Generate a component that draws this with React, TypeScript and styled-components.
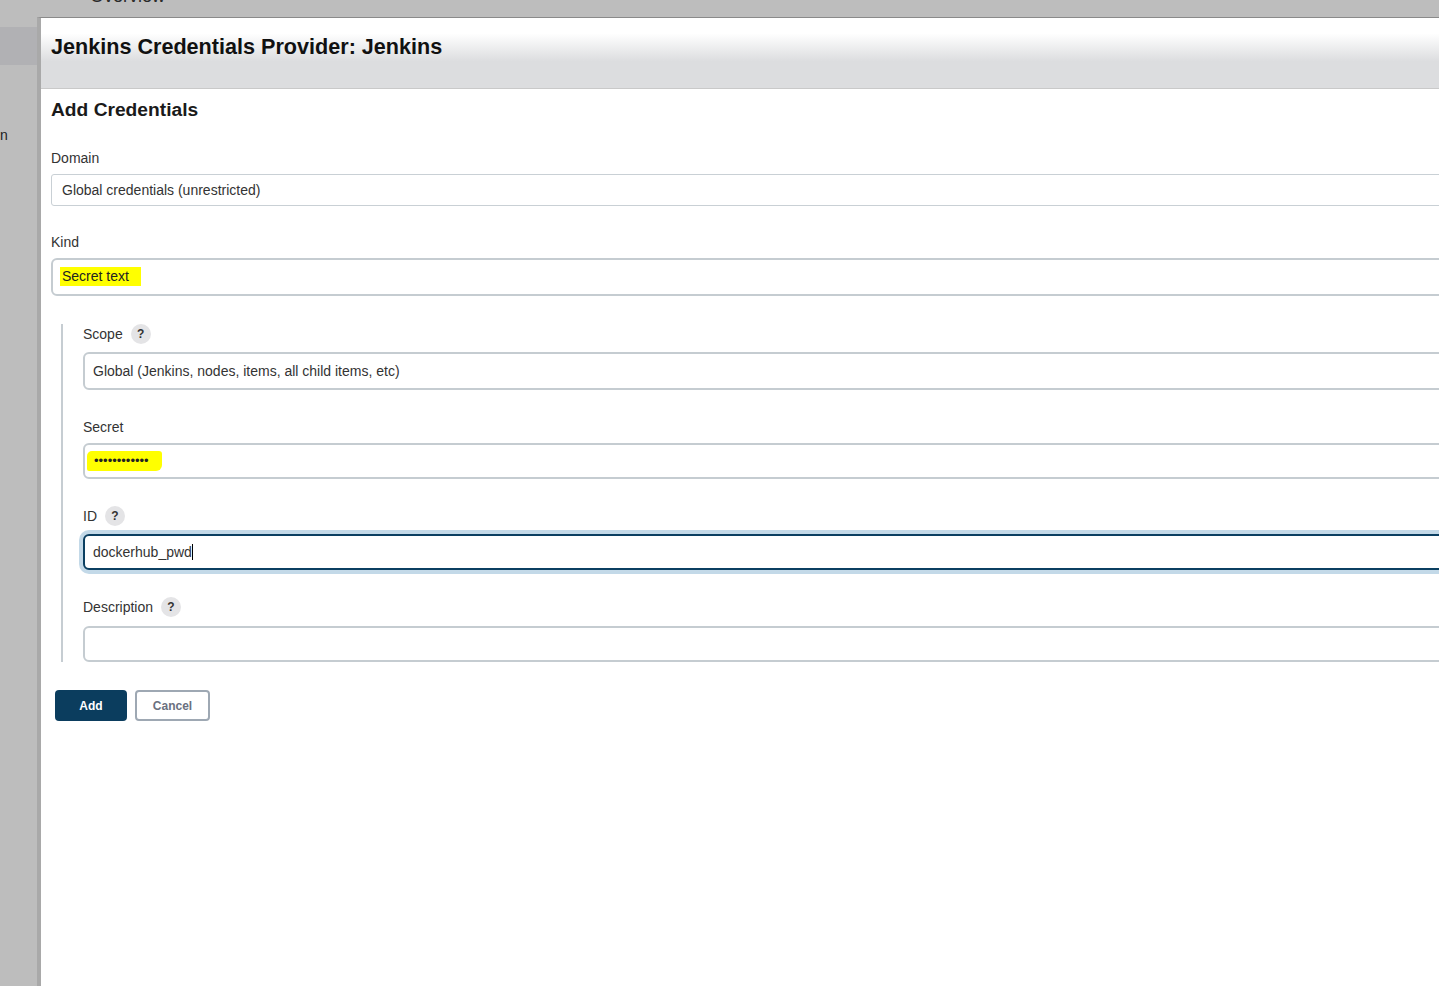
import React from 'react';
import styled, { createGlobalStyle } from 'styled-components';

const GlobalStyle = createGlobalStyle`
  html, body { margin: 0; padding: 0; height: 100%; overflow: hidden; background: #bdbdbd; }
  body { font-family: "Liberation Sans", Arial, sans-serif; color: #333; }
  #root { height: 100%; }
  * { box-sizing: border-box; }
`;

const Page = styled.div`
  display: flex;
  width: 100vw;
  height: 100vh;
  overflow: hidden;
`;

const Sidebar = styled.aside`
  width: 37px;
  flex-shrink: 0;
  background: #bdbdbd;
  display: flex;
  flex-direction: column;
  padding-top: 27px;
  overflow: hidden;
`;

const SideItem = styled.div<{ $active?: boolean }>`
  height: ${p => (p.$active ? '38px' : '18px')};
  margin-top: ${p => (p.$active ? '0' : '61px')};
  background: ${p => (p.$active ? '#b1b1b4' : 'transparent')};
  font-size: 14px;
  line-height: 18px;
  color: #222;
  white-space: nowrap;
`;

const Main = styled.div`
  flex: 1;
  min-width: 0;
  display: flex;
  flex-direction: column;
  overflow: hidden;
`;

const TopStrip = styled.div`
  height: 17px;
  flex-shrink: 0;
  overflow: hidden;
  padding-left: 53px;
`;

const TopStripText = styled.div`
  margin-top: -13px;
  font-size: 18px;
  line-height: 18px;
  color: #2a2a2a;
`;

const Dialog = styled.section`
  flex: 1;
  width: 1470px;
  flex-shrink: 0;
  background: #fff;
  border-top: 1px solid #8a8a8a;
  border-left: 4px solid #a9a9a9;
  display: flex;
  flex-direction: column;
`;

const DialogHeader = styled.header`
  height: 71px;
  flex-shrink: 0;
  padding: 17px 10px 0;
  background: linear-gradient(to bottom, #ffffff 0%, #ffffff 22%, #dcdddf 62%, #dcdddf 100%);
  border-bottom: 1px solid #c9c9c9;
`;

const DialogTitle = styled.h1`
  margin: 0;
  font-size: 21.6px;
  line-height: 24px;
  font-weight: 700;
  color: #111;
`;

const DialogBody = styled.div`
  padding: 0 10px;
  display: flex;
  flex-direction: column;
`;

const Heading = styled.h2`
  margin: 10px 0 0;
  font-size: 19.2px;
  line-height: 22px;
  font-weight: 700;
  color: #1a1a1a;
`;

const Form = styled.div`
  margin-top: 27px;
  display: flex;
  flex-direction: column;
  gap: 26px;
`;

const Nested = styled.div`
  margin: 2px 0 0 10px;
  border-left: 2px solid #c6cdd2;
  padding-left: 20px;
  display: flex;
  flex-direction: column;
  gap: 27px;
`;

const Field = styled.div<{ $gap: number }>`
  display: flex;
  flex-direction: column;
  gap: ${p => p.$gap}px;
`;

const LabelRow = styled.div`
  height: 20px;
  display: flex;
  align-items: center;
  gap: 8px;
  font-size: 14px;
  color: #333;
`;

const HelpBadge = styled.span`
  width: 20px;
  height: 20px;
  border-radius: 50%;
  background: #e4e4e6;
  display: inline-flex;
  align-items: center;
  justify-content: center;
  font-size: 12px;
  font-weight: 700;
  color: #333;
`;

const Control = styled.div<{ $variant: 'plain' | 'select' | 'text'; $focused?: boolean }>`
  width: 100%;
  display: flex;
  align-items: center;
  font-size: 14px;
  color: #333;
  background: #fff;
  height: ${p => (p.$variant === 'plain' ? '32px' : p.$variant === 'select' ? '38px' : '36px')};
  border: ${p => (p.$variant === 'plain' ? '1px' : '2px')} solid
    ${p => (p.$focused ? '#0b3f61' : p.$variant === 'plain' ? '#c9d0d5' : '#c5ccd1')};
  border-radius: ${p => (p.$variant === 'plain' ? '3px' : '6px')};
  padding-left: ${p => (p.$variant === 'plain' ? '10px' : '8px')};
  box-shadow: ${p => (p.$focused ? '0 0 0 4px #c3d9e8' : 'none')};
`;

const Marker = styled.span<{ $kind: 'text' | 'dots' }>`
  background: #ffff00;
  color: #222;
  height: ${p => (p.$kind === 'text' ? '19px' : '20px')};
  line-height: ${p => (p.$kind === 'text' ? '19px' : '20px')};
  padding: ${p => (p.$kind === 'text' ? '0 12px 0 2px' : '0 13px 0 7px')};
  margin-left: ${p => (p.$kind === 'text' ? '-1px' : '-6px')};
  border-radius: ${p => (p.$kind === 'text' ? '0' : '5px 3px 6px 2px')};
  font-size: ${p => (p.$kind === 'text' ? '14px' : '13px')};
  margin-top: ${p => (p.$kind === 'text' ? '-2px' : '0')};
`;

const Caret = styled.span`
  display: inline-block;
  width: 1px;
  height: 16px;
  background: #000;
`;

const ButtonRow = styled.div`
  margin: 2px 0 0 4px;
  display: flex;
  gap: 8px;
`;

const Button = styled.button<{ $primary?: boolean }>`
  height: 31px;
  width: ${p => (p.$primary ? '72px' : '75px')};
  border-radius: 4px;
  font-family: "Liberation Sans", Arial, sans-serif;
  font-size: 12px;
  font-weight: 700;
  cursor: pointer;
  padding: 0;
  background: ${p => (p.$primary ? '#0b3d5e' : '#fff')};
  color: ${p => (p.$primary ? '#fff' : '#6a7080')};
  border: ${p => (p.$primary ? 'none' : '2px solid #9ea8b3')};
`;

export default function App() {
  return (
    <>
      <GlobalStyle />
      <Page>
        <Sidebar>
          <SideItem $active />
          <SideItem>n</SideItem>
        </Sidebar>
        <Main>
          <TopStrip>
            <TopStripText>Overview</TopStripText>
          </TopStrip>
          <Dialog>
            <DialogHeader>
              <DialogTitle>Jenkins Credentials Provider: Jenkins</DialogTitle>
            </DialogHeader>
            <DialogBody>
              <Heading>Add Credentials</Heading>
              <Form>
                <Field $gap={6}>
                  <LabelRow>Domain</LabelRow>
                  <Control $variant="plain">Global credentials (unrestricted)</Control>
                </Field>
                <Field $gap={6}>
                  <LabelRow>Kind</LabelRow>
                  <Control $variant="select">
                    <Marker $kind="text">Secret text</Marker>
                  </Control>
                </Field>
                <Nested>
                  <Field $gap={8}>
                    <LabelRow>
                      Scope <HelpBadge>?</HelpBadge>
                    </LabelRow>
                    <Control $variant="select">Global (Jenkins, nodes, items, all child items, etc)</Control>
                  </Field>
                  <Field $gap={6}>
                    <LabelRow>Secret</LabelRow>
                    <Control $variant="text">
                      <Marker $kind="dots">••••••••••••</Marker>
                    </Control>
                  </Field>
                  <Field $gap={8}>
                    <LabelRow>
                      ID <HelpBadge>?</HelpBadge>
                    </LabelRow>
                    <Control $variant="text" $focused>
                      dockerhub_pwd
                      <Caret />
                    </Control>
                  </Field>
                  <Field $gap={9}>
                    <LabelRow>
                      Description <HelpBadge>?</HelpBadge>
                    </LabelRow>
                    <Control $variant="text" />
                  </Field>
                </Nested>
                <ButtonRow>
                  <Button $primary>Add</Button>
                  <Button>Cancel</Button>
                </ButtonRow>
              </Form>
            </DialogBody>
          </Dialog>
        </Main>
      </Page>
    </>
  );
}
